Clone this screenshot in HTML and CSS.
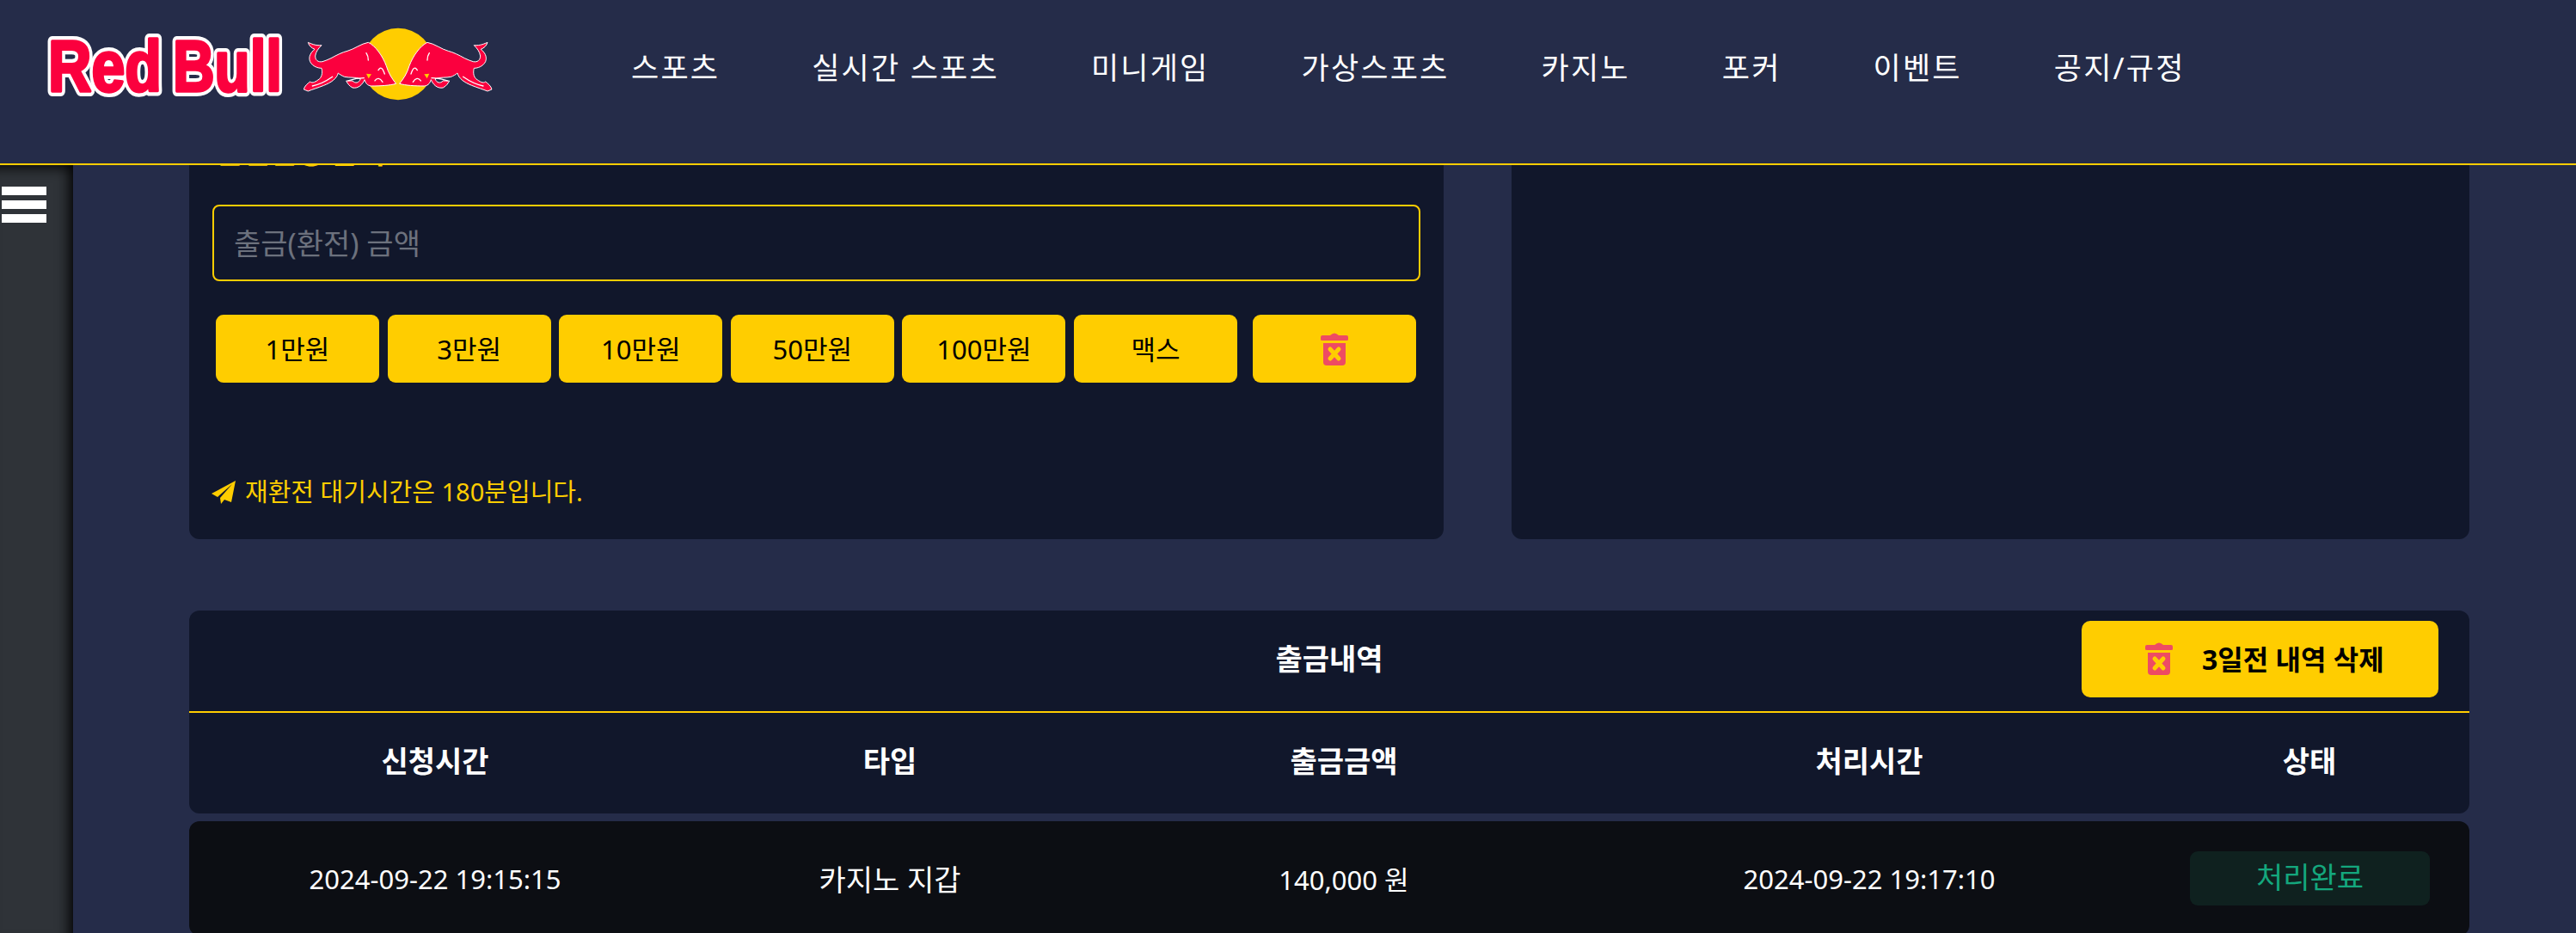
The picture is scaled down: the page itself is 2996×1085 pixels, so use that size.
FILE: index.html
```html
<!DOCTYPE html>
<html lang="ko">
<head>
<meta charset="utf-8">
<title>출금내역</title>
<link rel="stylesheet" href="styles.css">
</head>
<body>
<svg class="sprites" width="0" height="0" aria-hidden="true">
  <defs>
    <symbol id="trash" viewBox="0 0 32 39">
      <path class="trash-body" d="M11 4 Q16 -1 21 4 H30 Q32 4 32 6 V9 Q32 10 30 10 H2 Q0 10 0 9 V6 Q0 4 2 4 Z"/>
      <path class="trash-body" d="M3 13 H29 V35 Q29 39 25 39 H7 Q3 39 3 35 Z"/>
      <path class="trash-x" d="M11 20 L21 31 M21 20 L11 31"/>
    </symbol>
    <g id="bull">
      <path class="bull-shape" d="M85 88 C95 92 110 100 132 98 C122 108 112 120 110 135 C110 150 120 158 135 155 C145 152 155 148 165 143 C185 132 205 122 222 118 C245 112 270 92 295 88 C320 100 345 135 358 170 C365 195 378 215 392 232 C370 238 340 240 305 240 C290 238 285 228 282 218 C275 235 260 250 240 246 C228 240 222 230 218 222 L240 222 C250 232 262 230 268 215 C250 208 230 212 212 208 C205 205 195 200 190 195 C185 215 165 228 140 238 C120 246 100 252 85 258 L70 252 C72 240 85 230 92 225 C100 232 112 225 125 215 C135 205 135 190 132 178 C120 178 100 172 92 155 C85 138 95 122 108 112 C98 108 88 100 85 88 Z"/>
      <path class="bull-line" d="M288 125 C293 132 295 140 295 150 M330 185 C338 170 346 178 352 198 M318 222 C326 210 336 212 345 226 M100 240 C125 235 150 222 170 208 M225 222 C245 215 262 212 280 212"/>
      <path class="bull-gap" d="M288 197 L306 199 L296 214 Z"/>
    </g>
  </defs>
</svg>

<header class="topbar">
  <svg class="logo" viewBox="50 30 525 90" width="525" height="90" role="img" aria-label="Red Bull">
    <defs>
      <text id="word-red" x="56" y="106" textLength="132" lengthAdjust="spacingAndGlyphs">Red</text>
      <text id="word-bull" x="201" y="106" textLength="127" lengthAdjust="spacingAndGlyphs">Bull</text>
    </defs>
    <use class="word-back" href="#word-red"/>
    <use class="word-back" href="#word-bull"/>
    <use class="word-front" href="#word-red"/>
    <use class="word-front" href="#word-bull"/>
    <circle class="sun" cx="463" cy="74.5" r="41.7"/>
    <g transform="translate(330 20) scale(.3333)">
      <use href="#bull"/>
      <use href="#bull" transform="translate(796 0) scale(-1 1)"/>
    </g>
  </svg>
  <nav class="menu">
    <a class="menu-item">스포츠</a>
    <a class="menu-item">실시간 스포츠</a>
    <a class="menu-item">미니게임</a>
    <a class="menu-item">가상스포츠</a>
    <a class="menu-item">카지노</a>
    <a class="menu-item">포커</a>
    <a class="menu-item">이벤트</a>
    <a class="menu-item">공지/규정</a>
  </nav>
</header>

<div class="layout">
  <aside class="sidebar">
    <div class="burger"><span></span><span></span><span></span></div>
  </aside>

  <main class="content">
    <div class="top-row">
      <section class="panel">
        <h2 class="panel-title">환전신청 금액</h2>
        <div class="amount-field">출금(환전) 금액</div>
        <div class="chips">
          <button class="chip">1만원</button>
          <button class="chip">3만원</button>
          <button class="chip">10만원</button>
          <button class="chip">50만원</button>
          <button class="chip">100만원</button>
          <button class="chip">맥스</button>
          <button class="chip chip-clear" aria-label="지우기"><svg class="trash-icon"><use href="#trash"/></svg></button>
        </div>
        <p class="notice">
          <svg class="plane" viewBox="0 0 28 27"><path d="M28 0 L0 15 L7 19 L24 4 L10 20 L11 27 L15 22 L23 25 Z"/></svg>
          <span>재환전 대기시간은 180분입니다.</span>
        </p>
      </section>
      <section class="panel"></section>
    </div>

    <section class="history">
      <div class="history-card">
        <div class="history-head">
          <h3 class="history-title">출금내역</h3>
          <button class="purge"><svg class="trash-icon"><use href="#trash"/></svg><span>3일전 내역 삭제</span></button>
        </div>
        <div class="cols cols-head">
          <div>신청시간</div><div>타입</div><div>출금금액</div><div>처리시간</div><div>상태</div>
        </div>
      </div>
      <div class="cols row">
        <div>2024-09-22 19:15:15</div>
        <div class="cell-ko">카지노 지갑</div>
        <div>140,000 원</div>
        <div>2024-09-22 19:17:10</div>
        <div><span class="status">처리완료</span></div>
      </div>
    </section>
  </main>
</div>
</body>
</html>
```
FILE: styles.css
```css
* { box-sizing: border-box; }
html, body { margin: 0; height: 1085px; overflow: hidden; }
body {
  background: #252c49;
  color: #fff;
  font-family: "Noto Sans", "Noto Sans CJK KR", sans-serif;
  font-size: 30px;
}
.sprites { display: block; height: 0; }

/* header */
.topbar {
  display: flex;
  align-items: flex-start;
  height: 192px;
  padding: 30px 0 0 50px;
  background: #252c49;
  border-bottom: 2px solid #ffcd00;
}
.logo { flex: none; display: block; }
.logo text {
  font-family: "Liberation Sans", sans-serif;
  font-weight: 700;
  font-size: 83px;
}
.word-back { fill: #fff; stroke: #fff; stroke-width: 12px; stroke-linejoin: round; }
.word-front { fill: #fb003e; stroke: #fb003e; stroke-width: 3.5px; stroke-linejoin: round; }
.sun { fill: #ffcd00; }
.bull-shape { fill: #fb003e; stroke: #fff; stroke-width: 3px; stroke-linejoin: round; }
.bull-line { fill: none; stroke: #fff; stroke-width: 4px; stroke-linecap: round; }
.bull-gap { fill: #ffcd00; }

.menu { display: flex; gap: 107px; margin: 19px 0 0 159px; }
.menu-item { font-size: 35px; line-height: 60px; letter-spacing: 2.2px; white-space: nowrap; }

/* page body */
.layout { display: flex; height: 893px; }
.sidebar {
  flex: none;
  width: 85px;
  padding: 25px 0 0 2px;
  background: #2f3338;
  box-shadow: inset -10px 8px 16px -6px #000;
}
.burger { display: flex; flex-direction: column; gap: 6px; width: 52px; }
.burger span { height: 10px; background: #fff; }

.content { flex: none; width: 2787px; padding: 0 0 0 135px; }
.top-row { display: grid; grid-template-columns: 1459px 1114px; gap: 79px; }
.panel {
  height: 435px;
  padding: 0 27px;
  background: #11172b;
  border-radius: 0 0 12px 12px;
  overflow: hidden;
}
.panel-title {
  height: 40px;
  margin: -35px 0 41px;
  padding-left: 4px;
  font-size: 34px;
  line-height: 40px;
  font-weight: 700;
  color: #ffcd00;
}
.amount-field {
  height: 89px;
  padding: 0 23px;
  border: 2px solid #ffcd00;
  border-radius: 8px;
  color: #6c717d;
  font-size: 34px;
  line-height: 87px;
}
.chips { display: flex; gap: 9.6px; margin: 39px 0 0 4px; }
.chip {
  width: 190px;
  height: 79px;
  padding: 0 0 3px;
  border: 0;
  border-radius: 9px;
  background: #ffcd00;
  color: #000;
  font: inherit;
  font-size: 31px;
}
.chip-clear { margin-left: 8.6px; padding: 0; display: flex; align-items: center; justify-content: center; }
.trash-icon { display: block; width: 32px; height: 39px; flex: none; }
.trash-body { fill: #ee4b63; }
.trash-x { fill: none; stroke: #ffcd00; stroke-width: 5px; stroke-linecap: round; }
.notice {
  display: flex;
  align-items: center;
  gap: 11px;
  margin: 107px 0 0 -1px;
  color: #ffcd00;
  font-size: 29px;
  line-height: 40px;
}
.plane { width: 28px; height: 27px; fill: #ffcd00; flex: none; }

/* history */
.history { width: 2652px; margin-top: 83px; display: flex; flex-direction: column; gap: 9px; }
.history-card { background: #11172b; border-radius: 12px; }
.history-head {
  display: grid;
  grid-template-columns: 1fr auto 1fr;
  align-items: center;
  height: 119px;
  padding: 0 36px 16px;
  border-bottom: 2px solid #ffcd00;
}
.history-title { grid-column: 2; margin: 8px 0 0; font-size: 34px; font-weight: 700; }
.purge {
  grid-column: 3;
  justify-self: end;
  display: flex;
  align-items: center;
  gap: 34px;
  width: 415px;
  height: 89px;
  padding: 0 0 3px 74px;
  margin-top: 12px;
  border: 0;
  border-radius: 10px;
  background: #ffcd00;
  color: #000;
  font: inherit;
  font-size: 32px;
  font-weight: 700;
}
.cols {
  display: grid;
  grid-template-columns: 572px 486px 570px 652px 372px;
  align-items: center;
  text-align: center;
}
.cols-head { height: 117px; padding-bottom: 8px; font-size: 34px; font-weight: 700; }
.row { height: 133px; background: #0c0e13; border-radius: 12px; font-size: 31px; }
.cell-ko { font-size: 34px; }
.status {
  display: block;
  width: 279px;
  height: 63px;
  margin: 0 0 0 47px;
  border-radius: 9px;
  background: #0f211f;
  color: #14a77d;
  font-size: 34px;
  line-height: 60px;
}
```
